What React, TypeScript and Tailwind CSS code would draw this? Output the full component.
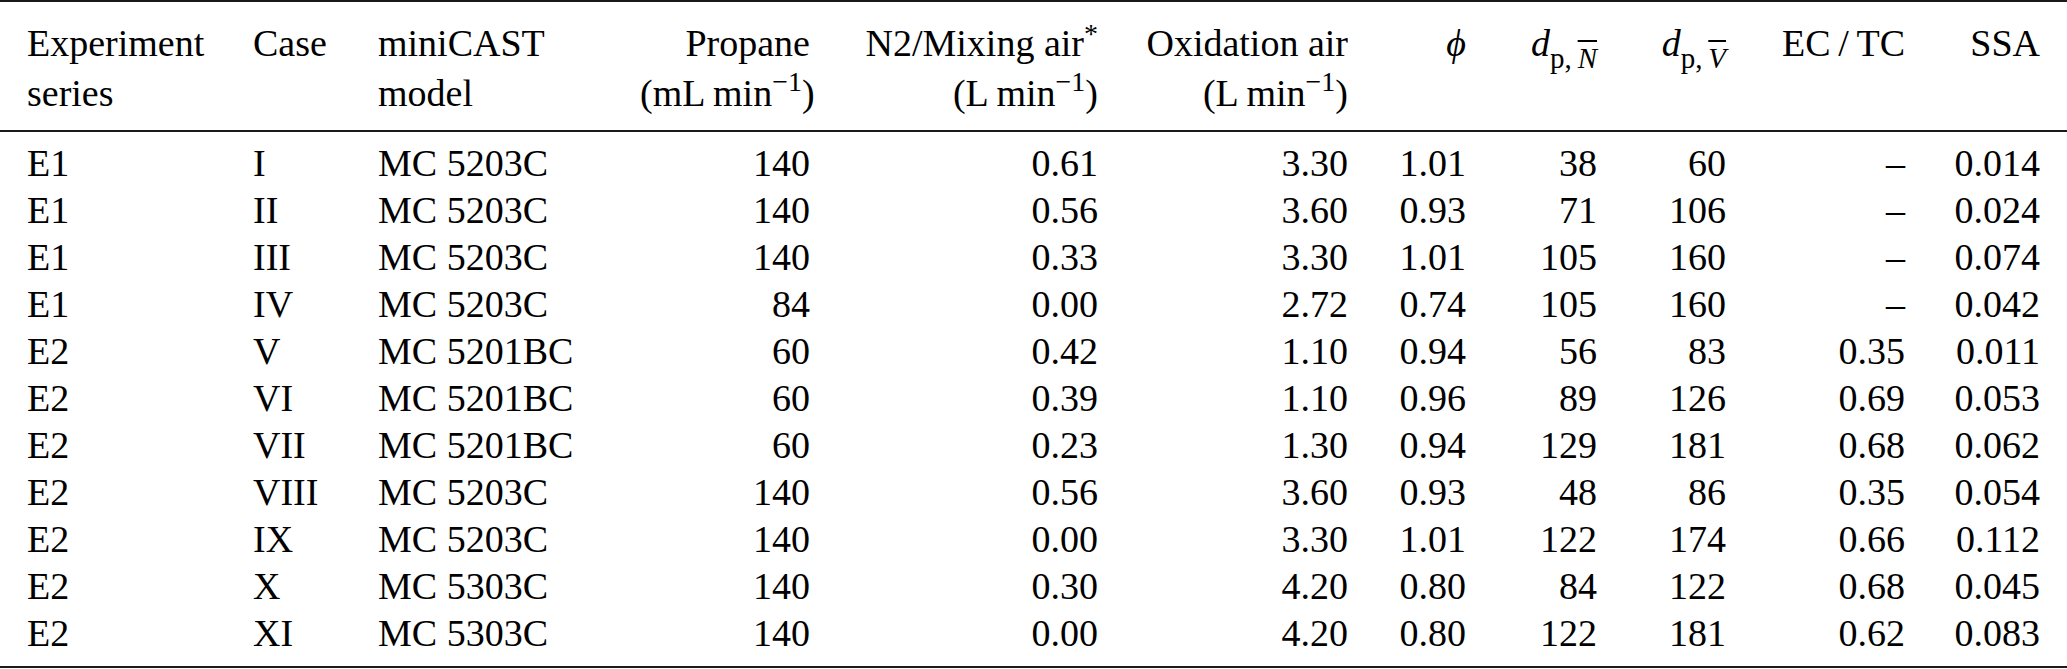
import React from 'react';

type Row = {
  series: string;
  caseId: string;
  model: string;
  propane: string;
  mixing: string;
  oxidation: string;
  phi: string;
  dN: string;
  dV: string;
  ectc: string;
  ssa: string;
};

const rows: Row[] = [
  { series: 'E1', caseId: 'I', model: 'MC 5203C', propane: '140', mixing: '0.61', oxidation: '3.30', phi: '1.01', dN: '38', dV: '60', ectc: '–', ssa: '0.014' },
  { series: 'E1', caseId: 'II', model: 'MC 5203C', propane: '140', mixing: '0.56', oxidation: '3.60', phi: '0.93', dN: '71', dV: '106', ectc: '–', ssa: '0.024' },
  { series: 'E1', caseId: 'III', model: 'MC 5203C', propane: '140', mixing: '0.33', oxidation: '3.30', phi: '1.01', dN: '105', dV: '160', ectc: '–', ssa: '0.074' },
  { series: 'E1', caseId: 'IV', model: 'MC 5203C', propane: '84', mixing: '0.00', oxidation: '2.72', phi: '0.74', dN: '105', dV: '160', ectc: '–', ssa: '0.042' },
  { series: 'E2', caseId: 'V', model: 'MC 5201BC', propane: '60', mixing: '0.42', oxidation: '1.10', phi: '0.94', dN: '56', dV: '83', ectc: '0.35', ssa: '0.011' },
  { series: 'E2', caseId: 'VI', model: 'MC 5201BC', propane: '60', mixing: '0.39', oxidation: '1.10', phi: '0.96', dN: '89', dV: '126', ectc: '0.69', ssa: '0.053' },
  { series: 'E2', caseId: 'VII', model: 'MC 5201BC', propane: '60', mixing: '0.23', oxidation: '1.30', phi: '0.94', dN: '129', dV: '181', ectc: '0.68', ssa: '0.062' },
  { series: 'E2', caseId: 'VIII', model: 'MC 5203C', propane: '140', mixing: '0.56', oxidation: '3.60', phi: '0.93', dN: '48', dV: '86', ectc: '0.35', ssa: '0.054' },
  { series: 'E2', caseId: 'IX', model: 'MC 5203C', propane: '140', mixing: '0.00', oxidation: '3.30', phi: '1.01', dN: '122', dV: '174', ectc: '0.66', ssa: '0.112' },
  { series: 'E2', caseId: 'X', model: 'MC 5303C', propane: '140', mixing: '0.30', oxidation: '4.20', phi: '0.80', dN: '84', dV: '122', ectc: '0.68', ssa: '0.045' },
  { series: 'E2', caseId: 'XI', model: 'MC 5303C', propane: '140', mixing: '0.00', oxidation: '4.20', phi: '0.80', dN: '122', dV: '181', ectc: '0.62', ssa: '0.083' },
];

function PerMin({ unit }: { unit: string }) {
  return (
    <span className="whitespace-nowrap">
      ({unit}
      {'\u2009'}min
      <span className="relative top-[-15px] text-[28px] leading-none">−1</span>)
    </span>
  );
}

function Diameter({ sym }: { sym: string }) {
  return (
    <span className="whitespace-nowrap">
      <span className="italic">d</span>
      <span className="relative top-[12px] text-[29px] leading-none">
        p,{'\u2009'}
        <span className="italic overline decoration-[1.5px]">{sym}</span>
      </span>
    </span>
  );
}

export default function App() {
  const td = 'p-0 align-baseline whitespace-nowrap';
  const h1 = `${td} pt-[18px] font-normal`;
  const h2 = `${td} pt-[4px] pb-[14px] font-normal`;
  return (
    <div className="w-[2067px] h-[669px] overflow-hidden bg-white text-black font-['Liberation_Serif',serif] text-[38px]">
      <table className="w-[2067px] table-fixed border-collapse">
        <colgroup>
          <col className="w-[253px]" />
          <col className="w-[125px]" />
          <col className="w-[262px]" />
          <col className="w-[170px]" />
          <col className="w-[288px]" />
          <col className="w-[250px]" />
          <col className="w-[118px]" />
          <col className="w-[131px]" />
          <col className="w-[129px]" />
          <col className="w-[179px]" />
          <col className="w-[162px]" />
        </colgroup>
        <thead className="border-t-2 border-b-2 border-[#1a1a1a]">
          <tr className="leading-[46px]">
            <th className={`${h1} pl-[27px] text-left`}>Experiment</th>
            <th className={`${h1} text-left`}>Case</th>
            <th className={`${h1} text-left`}>miniCAST</th>
            <th className={`${h1} text-right`}>Propane</th>
            <th className={`${h1} text-right`}>
              N2/Mixing air
              <span className="relative top-[-13px] text-[28px] leading-none">*</span>
            </th>
            <th className={`${h1} text-right`}>Oxidation air</th>
            <th className={`${h1} text-right`}>
              <span className="italic leading-none">ϕ</span>
            </th>
            <th className={`${h1} text-right`}>
              <Diameter sym="N" />
            </th>
            <th className={`${h1} text-right`}>
              <Diameter sym="V" />
            </th>
            <th className={`${h1} text-right`}>EC{'\u2009'}/{'\u2009'}TC</th>
            <th className={`${h1} pr-[27px] text-right`}>SSA</th>
          </tr>
          <tr className="leading-[46px]">
            <th className={`${h2} pl-[27px] text-left`}>series</th>
            <th className={h2}></th>
            <th className={`${h2} text-left`}>model</th>
            <th className={`${h2} text-right`}>
              <PerMin unit="mL" />
            </th>
            <th className={`${h2} text-right`}>
              <PerMin unit="L" />
            </th>
            <th className={`${h2} text-right`}>
              <PerMin unit="L" />
            </th>
            <th className={h2}></th>
            <th className={h2}></th>
            <th className={h2}></th>
            <th className={h2}></th>
            <th className={`${h2} pr-[27px]`}></th>
          </tr>
        </thead>
        <tbody className="border-b-2 border-[#1a1a1a]">
          {rows.map((r, i) => {
            const pad = i === 0 ? 'pt-[8px]' : i === rows.length - 1 ? 'pb-[9px]' : '';
            return (
              <tr key={i} className="leading-[47px]">
                <td className={`${td} ${pad} pl-[27px] text-left`}>{r.series}</td>
                <td className={`${td} ${pad} text-left`}>{r.caseId}</td>
                <td className={`${td} ${pad} text-left`}>{r.model}</td>
                <td className={`${td} ${pad} text-right`}>{r.propane}</td>
                <td className={`${td} ${pad} text-right`}>{r.mixing}</td>
                <td className={`${td} ${pad} text-right`}>{r.oxidation}</td>
                <td className={`${td} ${pad} text-right`}>{r.phi}</td>
                <td className={`${td} ${pad} text-right`}>{r.dN}</td>
                <td className={`${td} ${pad} text-right`}>{r.dV}</td>
                <td className={`${td} ${pad} text-right`}>{r.ectc}</td>
                <td className={`${td} ${pad} pr-[27px] text-right`}>{r.ssa}</td>
              </tr>
            );
          })}
        </tbody>
      </table>
    </div>
  );
}
